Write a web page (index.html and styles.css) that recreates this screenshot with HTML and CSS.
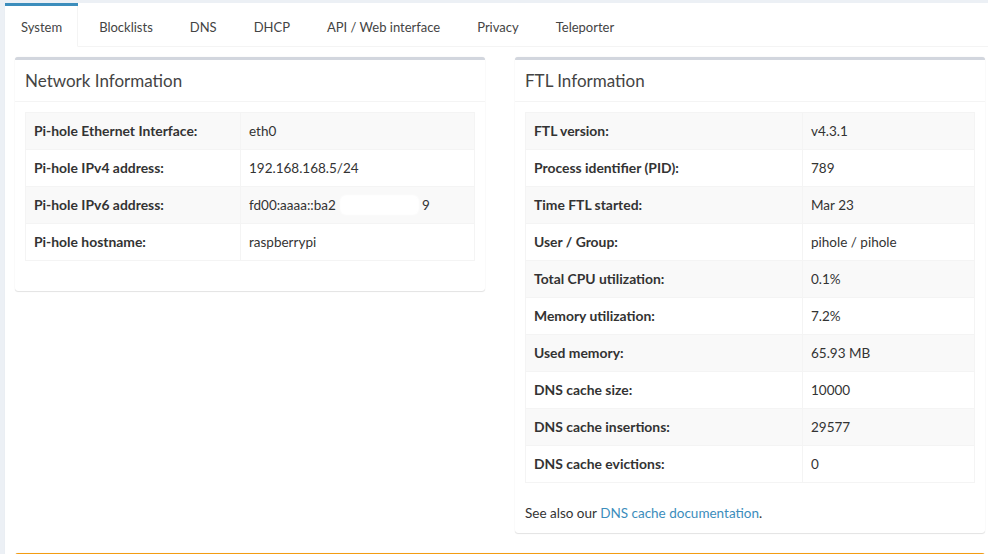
FILE: index.html
```html
<!DOCTYPE html>
<html>
<head>
<meta charset="utf-8">
<link rel="stylesheet" href="styles.css">
</head>
<body>
<div class="tabs-card">
  <ul class="tabs">
    <li class="tab active"><a>System</a></li>
    <li class="tab"><a>Blocklists</a></li>
    <li class="tab"><a>DNS</a></li>
    <li class="tab"><a>DHCP</a></li>
    <li class="tab"><a>API / Web interface</a></li>
    <li class="tab"><a>Privacy</a></li>
    <li class="tab"><a>Teleporter</a></li>
  </ul>
  <div class="tab-content">
    <div class="row">
      <div class="box">
        <div class="box-header"><h3>Network Information</h3></div>
        <div class="box-body">
          <table class="info net">
            <tr><th>Pi-hole Ethernet Interface:</th><td>eth0</td></tr>
            <tr><th>Pi-hole IPv4 address:</th><td>192.168.168.5/24</td></tr>
            <tr><th>Pi-hole IPv6 address:</th><td><span class="pre">fd00:aaaa::ba2</span><span class="redact"></span>9</td></tr>
            <tr><th>Pi-hole hostname:</th><td>raspberrypi</td></tr>
          </table>
        </div>
      </div>
      <div class="box">
        <div class="box-header"><h3>FTL Information</h3></div>
        <div class="box-body">
          <table class="info ftl">
            <tr><th>FTL version:</th><td>v4.3.1</td></tr>
            <tr><th>Process identifier (PID):</th><td>789</td></tr>
            <tr><th>Time FTL started:</th><td>Mar 23</td></tr>
            <tr><th>User / Group:</th><td>pihole / pihole</td></tr>
            <tr><th>Total CPU utilization:</th><td>0.1%</td></tr>
            <tr><th>Memory utilization:</th><td>7.2%</td></tr>
            <tr><th>Used memory:</th><td>65.93 MB</td></tr>
            <tr><th>DNS cache size:</th><td>10000</td></tr>
            <tr><th>DNS cache insertions:</th><td>29577</td></tr>
            <tr><th>DNS cache evictions:</th><td>0</td></tr>
          </table>
          <p class="note">See also our <a class="link">DNS cache documentation</a>.</p>
        </div>
      </div>
    </div>
    <div class="box box-warning">
      <div class="box-header"><h3>&nbsp;</h3></div>
    </div>
  </div>
</div>
</body>
</html>
```

FILE: styles.css
```css
html, body {
  margin: 0;
  padding: 0;
  height: 100%;
  overflow: hidden;
}
body {
  background: #ecf0f5;
  font-family: Lato, "Liberation Sans", sans-serif;
  font-size: 13.5px;
  line-height: 20px;
  color: #333;
}
.tabs-card {
  width: 990px;
  margin: 3px 0 0 5px;
  background: #fff;
  border-radius: 3px;
  box-shadow: 0 1px 1px rgba(0,0,0,0.1);
}
.tabs {
  list-style: none;
  margin: 0;
  padding: 0;
  display: flex;
  border-bottom: 1px solid #f4f4f4;
}
.tab {
  border-top: 3px solid transparent;
  margin-right: 5px;
  margin-bottom: -1px;
  font-size: 13px;
}
.tab a {
  display: block;
  padding: 11px 15px 9px;
  color: #444;
  border-left: 1px solid transparent;
  border-right: 1px solid transparent;
  border-bottom: 1px solid transparent;
}
.tab.active {
  border-top-color: #3c8dbc;
}
.tab.active a {
  background: #fff;
  border-right-color: #f4f4f4;
  border-bottom-color: #fff;
}
.tab-content {
  padding: 10px;
}
.row {
  display: flex;
  gap: 30px;
  align-items: flex-start;
}
.row > .box {
  flex: 1 1 0;
}
.box {
  background: #fff;
  border-top: 3px solid #d2d6de;
  border-radius: 3px;
  box-shadow: 0 1px 1px rgba(0,0,0,0.1), 0 0 1px rgba(0,0,0,0.12);
  margin-bottom: 20px;
}
.box-warning {
  border-top-color: #f39c12;
}
.box-header {
  padding: 10px;
  border-bottom: 1px solid #f4f4f4;
}
.box-header h3 {
  margin: 0;
  font-size: 17px;
  font-weight: normal;
  line-height: 21px;
  color: #444;
}
.box-body {
  padding: 10px;
}
.info {
  width: 100%;
  border-collapse: collapse;
  margin-bottom: 20px;
}
.info th, .info td {
  border: 1px solid #f4f4f4;
  padding: 8px;
  text-align: left;
  line-height: 20px;
}
.info th {
  font-weight: bold;
  font-size: 13.9px;
}
.info tr:nth-child(odd) {
  background: #f9f9f9;
}
.net th { width: 198px; }
.ftl th { width: 260px; }
.pre {
  display: inline-block;
  width: 92px;
  white-space: nowrap;
}
.redact {
  display: inline-block;
  width: 77px;
  height: 18px;
  margin-right: 4px;
  vertical-align: -4px;
  background: #fff;
  border-radius: 5px;
  box-shadow: 0 0 2px 1px #fff;
}
.note {
  margin: 0;
}
.link {
  color: #3c8dbc;
}
```
